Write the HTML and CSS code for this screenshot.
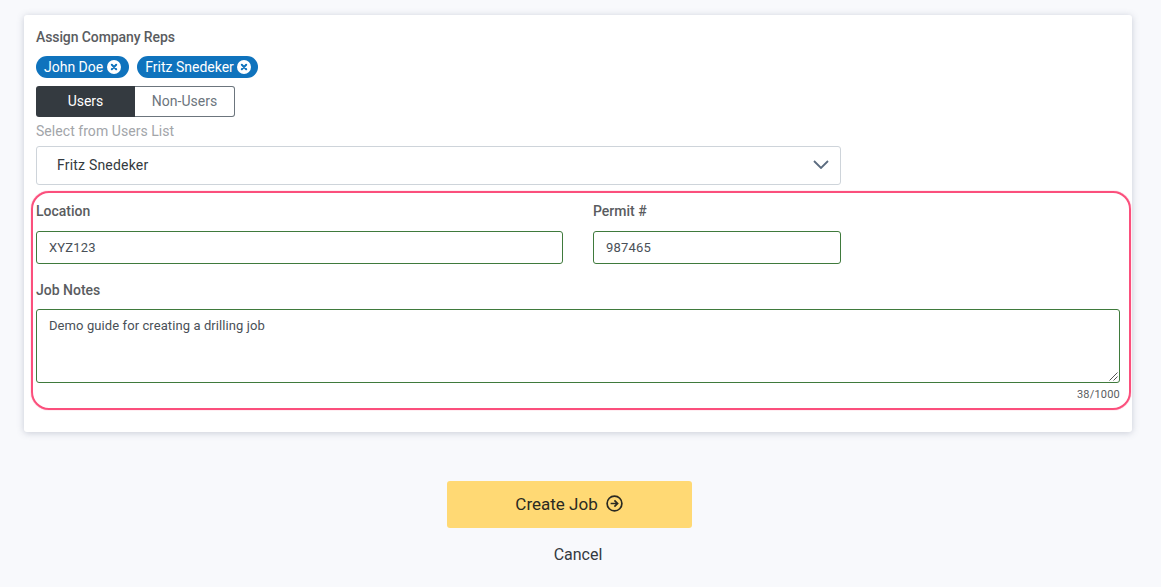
FILE: index.html
```html
<!DOCTYPE html>
<html lang="en">
<head>
<meta charset="utf-8">
<title>Create Job</title>
<link rel="stylesheet" href="styles.css">
</head>
<body>
<main class="page">
  <section class="card">
    <div class="label first">Assign Company Reps</div>
    <div class="chips">
      <span class="chip">John Doe
        <svg class="chip-x" viewBox="0 0 14 14" width="14" height="14"><circle cx="7" cy="7" r="7" fill="#fff"/><path d="M4.8 4.8l4.4 4.4M9.2 4.8l-4.4 4.4" stroke="#0f73bd" stroke-width="2" stroke-linecap="round"/></svg>
      </span>
      <span class="chip tight">Fritz Snedeker
        <svg class="chip-x" viewBox="0 0 14 14" width="14" height="14"><circle cx="7" cy="7" r="7" fill="#fff"/><path d="M4.8 4.8l4.4 4.4M9.2 4.8l-4.4 4.4" stroke="#0f73bd" stroke-width="2" stroke-linecap="round"/></svg>
      </span>
    </div>
    <div class="toggle">
      <span class="tog on">Users</span>
      <span class="tog off">Non-Users</span>
    </div>
    <div class="hint">Select from Users List</div>
    <div class="select">
      <span>Fritz Snedeker</span>
      <svg viewBox="0 0 16 9" width="16" height="9"><path d="M1 1l7 7 7-7" fill="none" stroke="#5b6b7f" stroke-width="1.8"/></svg>
    </div>
    <div class="highlight-area">
      <div class="highlight"></div>
      <div class="row">
        <div class="field loc">
          <div class="label">Location</div>
          <div class="input">XYZ123</div>
        </div>
        <div class="field permit">
          <div class="label">Permit #</div>
          <div class="input">987465</div>
        </div>
      </div>
      <div class="label notes-label">Job Notes</div>
      <div class="textarea">Demo guide for creating a drilling job
        <svg class="grip" viewBox="0 0 9 9" width="9" height="9"><path d="M0.5 8.5l8-8M4.5 8.5l4-4" stroke="#555" stroke-width="1" fill="none"/></svg>
      </div>
      <div class="count">38/1000</div>
    </div>
  </section>
  <div class="actions">
    <button class="primary" type="button">Create Job
      <svg viewBox="0 0 17 17" width="17" height="17"><circle cx="8.5" cy="8.5" r="7.4" fill="none" stroke="#2a2a22" stroke-width="1.7"/><path d="M4.6 8.5h7M8.4 5.3l3.2 3.2-3.2 3.2" fill="none" stroke="#2a2a22" stroke-width="1.7"/></svg>
    </button>
    <div class="cancel">Cancel</div>
  </div>
</main>
</body>
</html>
```
FILE: styles.css
```css
* { box-sizing: border-box; }
html, body { margin: 0; height: 100%; }
body {
  background: #f8f9fc;
  font-family: Roboto, "Liberation Sans", sans-serif;
  color: #212529;
  overflow: hidden;
}
.page { padding: 15px 29px 0 24px; }
.card {
  height: 417px;
  padding: 13px 12px 0;
  background: #fff;
  border-radius: 3px;
  box-shadow: 0 1px 7px rgba(80, 90, 120, 0.28);
}
.label {
  font-size: 14px;
  line-height: 18px;
  font-weight: 500;
  color: #5a5c60;
}
.first { letter-spacing: -0.1px; }
.chips { display: flex; gap: 8px; margin-top: 10px; }
.chip {
  display: inline-flex;
  align-items: center;
  gap: 4px;
  height: 22px;
  padding: 0 8px;
  border-radius: 11px;
  background: #0f73bd;
  color: #fff;
  font-size: 14px;
  font-weight: 400;
}
.tight { padding-right: 7px; gap: 3px; }
.chip-x { flex: none; }
.toggle { display: flex; margin-top: 8px; width: 199px; height: 31px; }
.tog {
  display: flex;
  align-items: center;
  justify-content: center;
  padding-bottom: 1px;
  font-size: 14px;
}
.on { width: 99px; background: #343a40; color: #fff; border-radius: 3px 0 0 3px; }
.off { width: 100px; background: #fff; color: #6c757d; border: 1px solid #6c757d; border-left: 0; border-radius: 0 3px 3px 0; }
.hint { margin-top: 6px; font-size: 14px; line-height: 17px; color: #a2a5a9; letter-spacing: 0.05px; }
.select {
  display: flex;
  align-items: center;
  justify-content: space-between;
  width: 805px;
  height: 39px;
  margin-top: 6px;
  padding: 0 11px 2px 20px;
  border: 1px solid #ced4da;
  border-radius: 3px;
  font-size: 14px;
  letter-spacing: 0.2px;
  color: #343a40;
}
.highlight-area { position: relative; margin-top: 17px; }
.highlight {
  position: absolute;
  left: -5px;
  top: -11px;
  width: 1100px;
  height: 219px;
  border: 2px solid #fb4f7c;
  border-radius: 18px;
  box-shadow: 0 0 1px #fb4f7c;
  pointer-events: none;
}
.row { display: flex; gap: 30px; width: 805px; }
.loc { width: 527px; }
.permit { width: 248px; }
.input {
  height: 33px;
  margin-top: 11px;
  padding: 0 12px;
  display: flex;
  align-items: center;
  border: 1px solid #3f7a3c;
  border-radius: 3px;
  font-size: 13px;
  letter-spacing: 0.2px;
  color: #495057;
}
.notes-label { margin-top: 17px; }
.textarea {
  position: relative;
  height: 74px;
  margin-top: 10px;
  padding: 8px 12px;
  border: 1px solid #3f7a3c;
  border-radius: 3px;
  font-size: 13px;
  line-height: 15px;
  letter-spacing: 0.09px;
  color: #495057;
}
.grip { position: absolute; right: 1px; bottom: 1px; }
.count { margin-top: 5px; text-align: right; font-size: 11px; line-height: 13px; letter-spacing: 0.2px; color: #5a5c60; }
.actions { display: flex; flex-direction: column; align-items: center; margin-top: 49px; }
.primary {
  display: flex;
  align-items: center;
  justify-content: center;
  gap: 8px;
  width: 245px;
  height: 47px;
  margin-right: 18px;
  padding: 0 0 2px;
  border: 0;
  border-radius: 3px;
  background: #ffd974;
  font: 400 17px Roboto, "Liberation Sans", sans-serif;
  color: #2a2a22;
}
.cancel { margin-top: 17px; font-size: 16px; line-height: 19px; color: #343a40; }
```
